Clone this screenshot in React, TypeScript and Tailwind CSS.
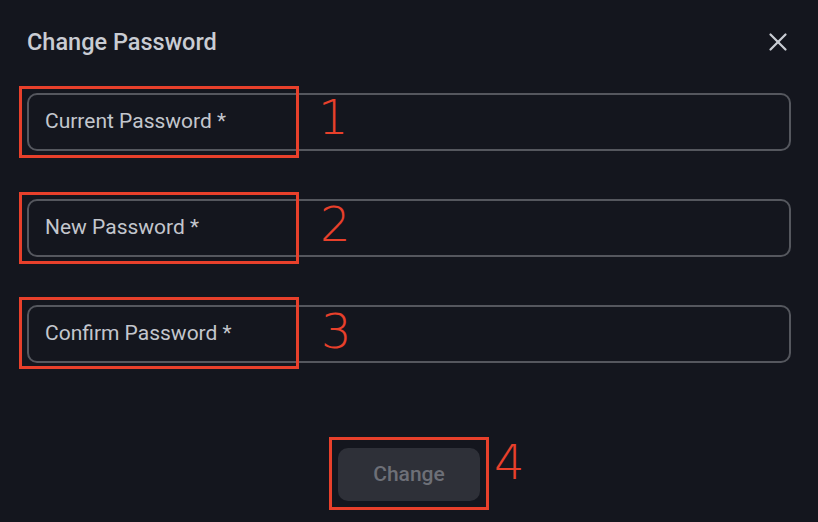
import { X } from "lucide-react";

const fields = ["Current Password *", "New Password *", "Confirm Password *"];

// hand-drawn annotation boxes from the screenshot
const marks = [
  { box: "left-[19px] top-[86px] w-[280px] h-[72px]", num: "1", at: "left-[318px] top-[93px]" },
  { box: "left-[19px] top-[192px] w-[280px] h-[72px]", num: "2", at: "left-[320px] top-[200px]" },
  { box: "left-[19px] top-[297px] w-[280px] h-[72px]", num: "3", at: "left-[321px] top-[307px]" },
  { box: "left-[329px] top-[437px] w-[160px] h-[73px]", num: "4", at: "left-[494px] top-[438px]" },
];

export default function App() {
  return (
    <div
      className="relative w-[818px] h-[522px] bg-[#14161e] overflow-hidden"
      style={{ fontFamily: "Roboto, 'Liberation Sans', sans-serif" }}
    >
      <div className="flex flex-col px-[27px] pt-[28px]">
        {/* Header */}
        <div className="flex items-center justify-between h-[28px]">
          <h2 className="text-[23.5px] leading-[28px] font-medium text-[#c9ccd3]">Change Password</h2>
          <button className="mr-[-2px] text-[#c9ccd3]">
            <X className="h-[30px] w-[30px]" strokeWidth={1.8} />
          </button>
        </div>

        {/* Fields */}
        <div className="flex flex-col gap-[48px] mt-[37px]">
          {fields.map((f) => (
            <div
              key={f}
              className="h-[58px] rounded-[10px] border-2 border-[#55575e] flex items-center px-[16px]"
            >
              <span className="text-[21px] text-[#c3c6cd]">{f}</span>
            </div>
          ))}
        </div>

        {/* Submit */}
        <div className="flex justify-center mt-[85px]">
          <button className="w-[142px] h-[53px] rounded-[10px] bg-[#2e3038] text-[21px] font-medium text-[#6d6f77]">
            Change
          </button>
        </div>
      </div>

      {marks.map((m) => (
        <div key={m.num}>
          <div className={`absolute border-[3px] border-[#e8402b] ${m.box}`} />
          <span
            className={`absolute text-[48px] leading-none text-[#e8402b] ${m.at}`}
            style={{ fontFamily: "'DejaVu Sans', sans-serif", fontWeight: 200 }}
          >
            {m.num}
          </span>
        </div>
      ))}
    </div>
  );
}
